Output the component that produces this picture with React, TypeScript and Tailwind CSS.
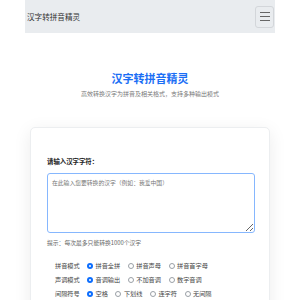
import { useState } from "react";

const cjk = "font-['Noto_Sans_CJK_SC','Noto_Sans',sans-serif]";

type Opt = { label: string; options: string[] };

const groups: Opt[] = [
  { label: "拼音模式", options: ["拼音全拼", "拼音声母", "拼音首字母"] },
  { label: "声调模式", options: ["音调输出", "不加音调", "数字音调"] },
  { label: "间隔符号", options: ["空格", "下划线", "连字符", "无间隔"] },
];

function Radio({ checked }: { checked: boolean }) {
  if (checked) {
    return (
      <span className="flex h-[6px] w-[6px] items-center justify-center rounded-full bg-[#0d6efd]">
        <span className="h-[2.4px] w-[2.4px] rounded-full bg-white" />
      </span>
    );
  }
  return <span className="h-[6px] w-[6px] rounded-full border-[0.8px] border-[#9aa0a6] bg-white" />;
}

function OptionRow({ group }: { group: Opt }) {
  const [value, setValue] = useState(0);
  return (
    <div className="flex h-[14px] items-center">
      <span className="w-[32px] text-[6.2px] leading-none text-[#444]">{group.label}</span>
      <div className="flex items-center gap-[7.5px]">
        {group.options.map((o, i) => (
          <label
            key={o}
            onClick={() => setValue(i)}
            className="flex cursor-pointer items-center gap-[2.5px] text-[6.2px] leading-none text-[#444]"
          >
            <Radio checked={value === i} />
            <span>{o}</span>
          </label>
        ))}
      </div>
    </div>
  );
}

export default function App() {
  return (
    <div className={`h-[300px] w-[300px] overflow-hidden bg-white ${cjk}`}>
      <nav className="mx-auto flex h-[33px] w-[250px] items-center justify-between bg-[#e9ecef] pl-[2px]">
        <span className="text-[7.6px] text-[#333]">汉字转拼音精灵</span>
        <button className="mr-[1px] flex h-[22px] w-[19px] flex-col items-center justify-center gap-[3px] rounded-[3px] border border-[#d3d6da]">
          <span className="h-[1px] w-[10px] bg-[#666]" />
          <span className="h-[1px] w-[10px] bg-[#666]" />
          <span className="h-[1px] w-[10px] bg-[#666]" />
        </button>
      </nav>

      <header className="pt-[38px] text-center">
        <h1 className="text-[11px] font-bold leading-[15px] text-[#1a6ef5]">汉字转拼音精灵</h1>
        <p className="mt-[4px] text-[6px] leading-[8px] text-[#777]">
          高效转换汉字为拼音及相关格式，支持多种输出模式
        </p>
      </header>

      <section className="mx-[30px] mt-[29px] rounded-[5px] border border-[#eceef0] bg-white px-[16px] pt-[29px] pb-4 shadow-[0_4px_18px_rgba(0,0,0,0.08)]">
        <label className="block text-[6.4px] font-bold leading-[10px] text-[#222]">请输入汉字字符：</label>
        <textarea
          placeholder="在此输入您要转换的汉字（例如：我爱中国）"
          className="mt-[6px] block h-[60px] w-[208px] resize-y rounded-[3px] border border-[#86b7fe] px-[4px] py-[5px] text-[5.8px] leading-[8px] text-[#222] outline-none placeholder:text-[#777]"
        />
        <p className="mt-[6px] text-[5.8px] leading-[8px] text-[#666]">提示：每次最多只能转换1000个汉字</p>
        <div className="mt-[12px] pl-[8px]">
          {groups.map((g) => (
            <OptionRow key={g.label} group={g} />
          ))}
        </div>
      </section>
    </div>
  );
}
